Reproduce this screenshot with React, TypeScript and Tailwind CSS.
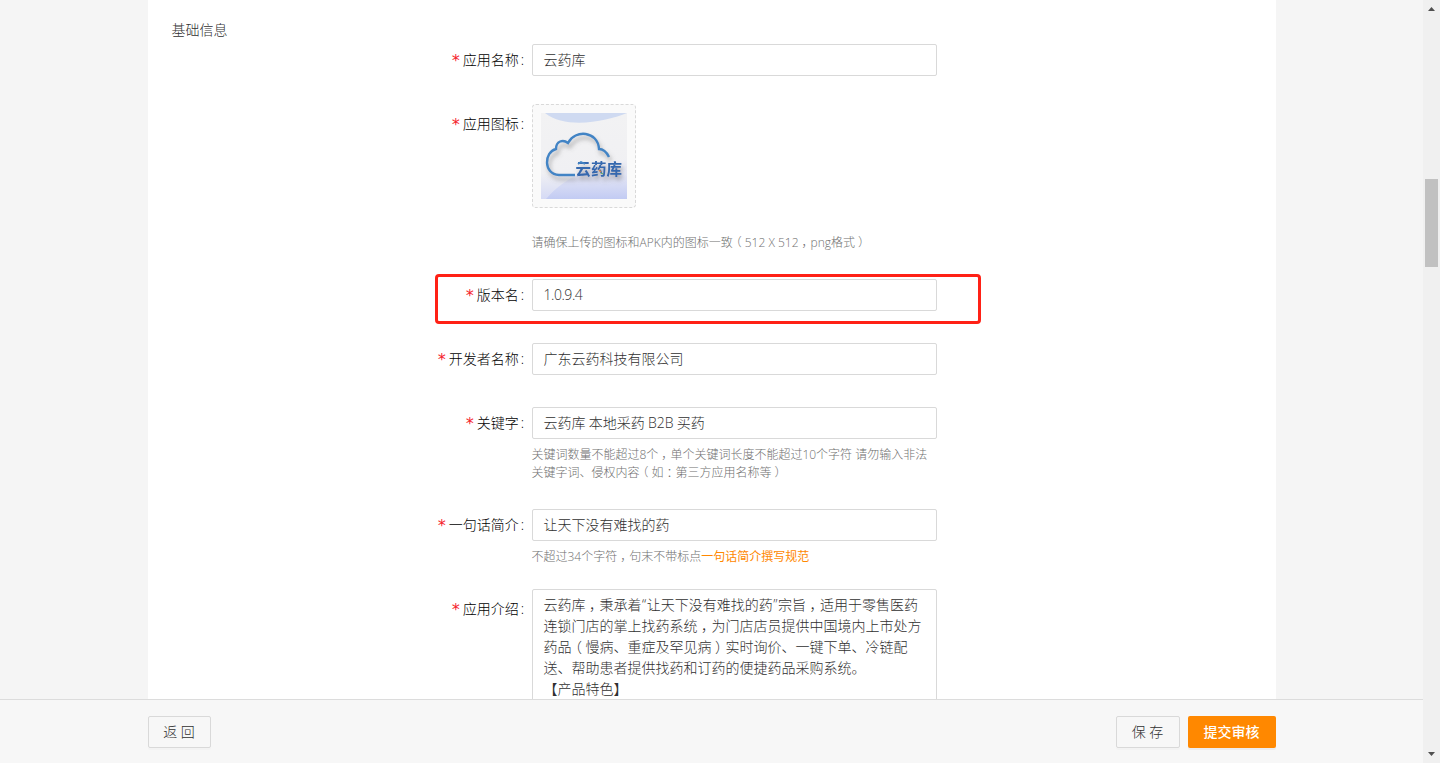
import React, { ReactNode } from "react";

const centred = "px-[0.25em] [font-feature-settings:'halt']";

const punctuation: Record<string, string> = {
  "，": centred,
  "：": centred,
  "（": centred,
  "）": centred,
  "“": "px-[0.5px]",
  "”": "px-[0.5px]",
};

// Centres full-width punctuation in its em box.
function Zh({ children }: { children: string }) {
  return (
    <>
      {children.split(/([，：（）“”])/).map((part, i) =>
        punctuation[part] ? (
          <span key={i} className={punctuation[part]}>
            {part}
          </span>
        ) : (
          part
        ),
      )}
    </>
  );
}

function Row({ label, height, offset = "pt-0", children }: { label: string; height: string; offset?: string; children: ReactNode }) {
  return (
    <div className={`flex shrink-0 items-start ${height}`}>
      <div className={`w-[384px] shrink-0 pr-2 ${offset}`}>
        <label className="flex h-[30px] items-center justify-end whitespace-nowrap text-black">
          <span className="mr-[2px] mt-[4px] font-['DejaVu_Sans_Mono',monospace] text-[16px] leading-none font-normal text-[#f5222d]">*</span>
          {label}
          <span className="ml-[2px]">:</span>
        </label>
      </div>
      <div className="w-[405px] shrink-0">{children}</div>
    </div>
  );
}

function Field({ value, spacing = "" }: { value: string; spacing?: string }) {
  return (
    <div
      className={`flex h-8 items-center whitespace-pre rounded-[2px] border border-[#d9d9d9] bg-white pb-[2px] pl-[10.5px] text-[#303030] ${spacing}`}
    >
      {value}
    </div>
  );
}

function Hint({ children }: { children: ReactNode }) {
  return <div className="-ml-[0.5px] whitespace-nowrap text-[12px] leading-[18px] text-[#707070]">{children}</div>;
}

function CloudLogo() {
  return (
    <svg viewBox="0 0 86 86" className="h-[86px] w-[86px]">
      <defs>
        <linearGradient id="base" x1="0" y1="0" x2="0" y2="1">
          <stop offset="0" stopColor="#f2f2f3" />
          <stop offset=".7" stopColor="#f0f0f3" />
          <stop offset="1" stopColor="#d5daf5" />
        </linearGradient>
        <linearGradient id="wave" x1="0" y1="0" x2="0" y2="1">
          <stop offset="0" stopColor="#f0f0f4" />
          <stop offset=".4" stopColor="#e4e6f5" />
          <stop offset="1" stopColor="#c2cbf3" />
        </linearGradient>
        <filter id="shadow" x="-20%" y="-20%" width="150%" height="150%">
          <feDropShadow dx="2" dy="4" stdDeviation="2.2" floodColor="#666" floodOpacity=".5" />
        </filter>
      </defs>
      <rect width="86" height="86" fill="url(#base)" />
      <path d="M4 0H86C67 8 25 17 4 0Z" fill="#cfdaf1" />
      <path d="M5 86C20 68 49 51 86 46V86Z" fill="url(#wave)" />
      <g filter="url(#shadow)">
        <path
          d="M34 62H18C2 61 3 39 15 36C15 28 22 26 27 30C34 16 57 18 58 36C63 36 66 40 68 44"
          fill="none"
          stroke="#4384c5"
          strokeWidth="2.4"
        />
        <text x="34.5" y="62" fontSize="15.5" fontWeight="700" fill="#3568ae" className="font-['Noto_Sans_CJK_SC',sans-serif]">
          云药库
        </text>
      </g>
      <path d="M37 51l3 -2l4 2" fill="none" stroke="#4384c5" strokeWidth="1.8" />
      <path d="M58 57l2 2" stroke="#d98548" strokeWidth="1.4" />
      <path d="M60 60l2 1" stroke="#62a765" strokeWidth="1.2" />
    </svg>
  );
}

const intro = [
  "云药库，秉承着“让天下没有难找的药”宗旨，适用于零售医药",
  "连锁门店的掌上找药系统，为门店店员提供中国境内上市处方",
  "药品（慢病、重症及罕见病）实时询价、一键下单、冷链配",
  "送、帮助患者提供找药和订药的便捷药品采购系统。",
  "【产品特色】",
];

export default function App() {
  return (
    <div
      lang="zh-CN"
      className="flex h-[763px] w-[1440px] overflow-hidden bg-[#f5f5f5] font-['Open_Sans','Noto_Sans_CJK_SC',sans-serif] text-[14px] font-light leading-[21px]"
    >
      <div className="flex w-[1423px] shrink-0 flex-col">
        <main className="ml-[148px] flex h-[699px] w-[1128px] shrink-0 flex-col overflow-hidden bg-white">
          <h2 className="h-11 shrink-0 pl-[23.5px] pt-[19px] text-[#303030]">基础信息</h2>
          <Row label="应用名称" height="h-[60px]">
            <Field value="云药库" />
          </Row>
          <Row label="应用图标" height="h-[170px]" offset="pt-1">
            <div className="flex h-[104px] w-[104px] items-center justify-center rounded-[4px] border border-dashed border-[#d9d9d9] bg-[#fafafa]">
              <CloudLogo />
            </div>
            <div className="mt-[26px]">
              <Hint>
                <Zh>请确保上传的图标和APK内的图标一致（512 X 512，png格式）</Zh>
              </Hint>
            </div>
          </Row>
          <div className="ml-[287px] h-[50px] w-[546px] shrink-0 rounded-[4px] border-[3px] border-[#ff2116] pt-[2px]">
            <div className="-ml-[290px]">
              <Row label="版本名" height="h-8">
                <Field value="1.0.9.4" spacing="tracking-[-0.45px]" />
              </Row>
            </div>
          </div>
          <div className="mt-[19px] flex flex-col">
            <Row label="开发者名称" height="h-[64px]">
              <Field value="广东云药科技有限公司" />
            </Row>
            <Row label="关键字" height="h-[102px]">
              <Field value="云药库 本地采药 B2B 买药" spacing="[word-spacing:-0.4px]" />
              <div className="mt-[7px]">
                <Hint>
                  <Zh>关键词数量不能超过8个，单个关键词长度不能超过10个字符 请勿输入非法</Zh>
                  <br />
                  <Zh>关键字词、侵权内容（如：第三方应用名称等）</Zh>
                </Hint>
              </div>
            </Row>
            <Row label="一句话简介" height="h-[80px]">
              <Field value="让天下没有难找的药" />
              <div className="mt-[7px]">
                <Hint>
                  <Zh>不超过34个字符，句末不带标点</Zh>
                  <a className="font-normal text-[#ff8800]">一句话简介撰写规范</a>
                </Hint>
              </div>
            </Row>
            <Row label="应用介绍" height="h-[140px]" offset="pt-1">
              <div className="h-[140px] whitespace-nowrap rounded-[2px] border border-[#d9d9d9] pl-[10.5px] pt-[4px] text-[#303030]">
                {intro.map((line) => (
                  <p key={line}>
                    <Zh>{line}</Zh>
                  </p>
                ))}
              </div>
            </Row>
          </div>
        </main>
        <footer className="flex h-16 shrink-0 items-start border-t border-[#dcdcdc] bg-[#f7f7f7] pl-[148px] pr-[147px] pt-4">
          <button className="h-8 w-[63px] rounded-[2px] border border-[#d9d9d9] pb-[2px] pr-px text-[#303030] shadow-[0_2px_0_rgba(0,0,0,0.015)]">返 回</button>
          <button className="ml-auto h-8 w-16 rounded-[2px] border border-[#d9d9d9] pb-[2px] pr-px text-[#303030] shadow-[0_2px_0_rgba(0,0,0,0.015)]">保 存</button>
          <button className="ml-2 h-8 w-[88px] rounded-[2px] bg-[#ff8800] pb-[2px] pr-px font-medium text-white shadow-[0_2px_0_rgba(0,0,0,0.04)]">提交审核</button>
        </footer>
      </div>
      <div className="flex w-[17px] shrink-0 flex-col items-center bg-[#f0f0f0]">
        <svg className="h-[17px] w-[17px] shrink-0" viewBox="0 0 17 17">
          <path d="M5 11L8.5 7L12 11Z" fill="#505050" />
        </svg>
        <div className="mt-[162px] h-[88px] w-[13px] bg-[#c1c1c1]" />
        <svg className="mt-auto h-[17px] w-[17px] shrink-0" viewBox="0 0 17 17">
          <path d="M5 6L8.5 10L12 6Z" fill="#505050" />
        </svg>
      </div>
    </div>
  );
}
